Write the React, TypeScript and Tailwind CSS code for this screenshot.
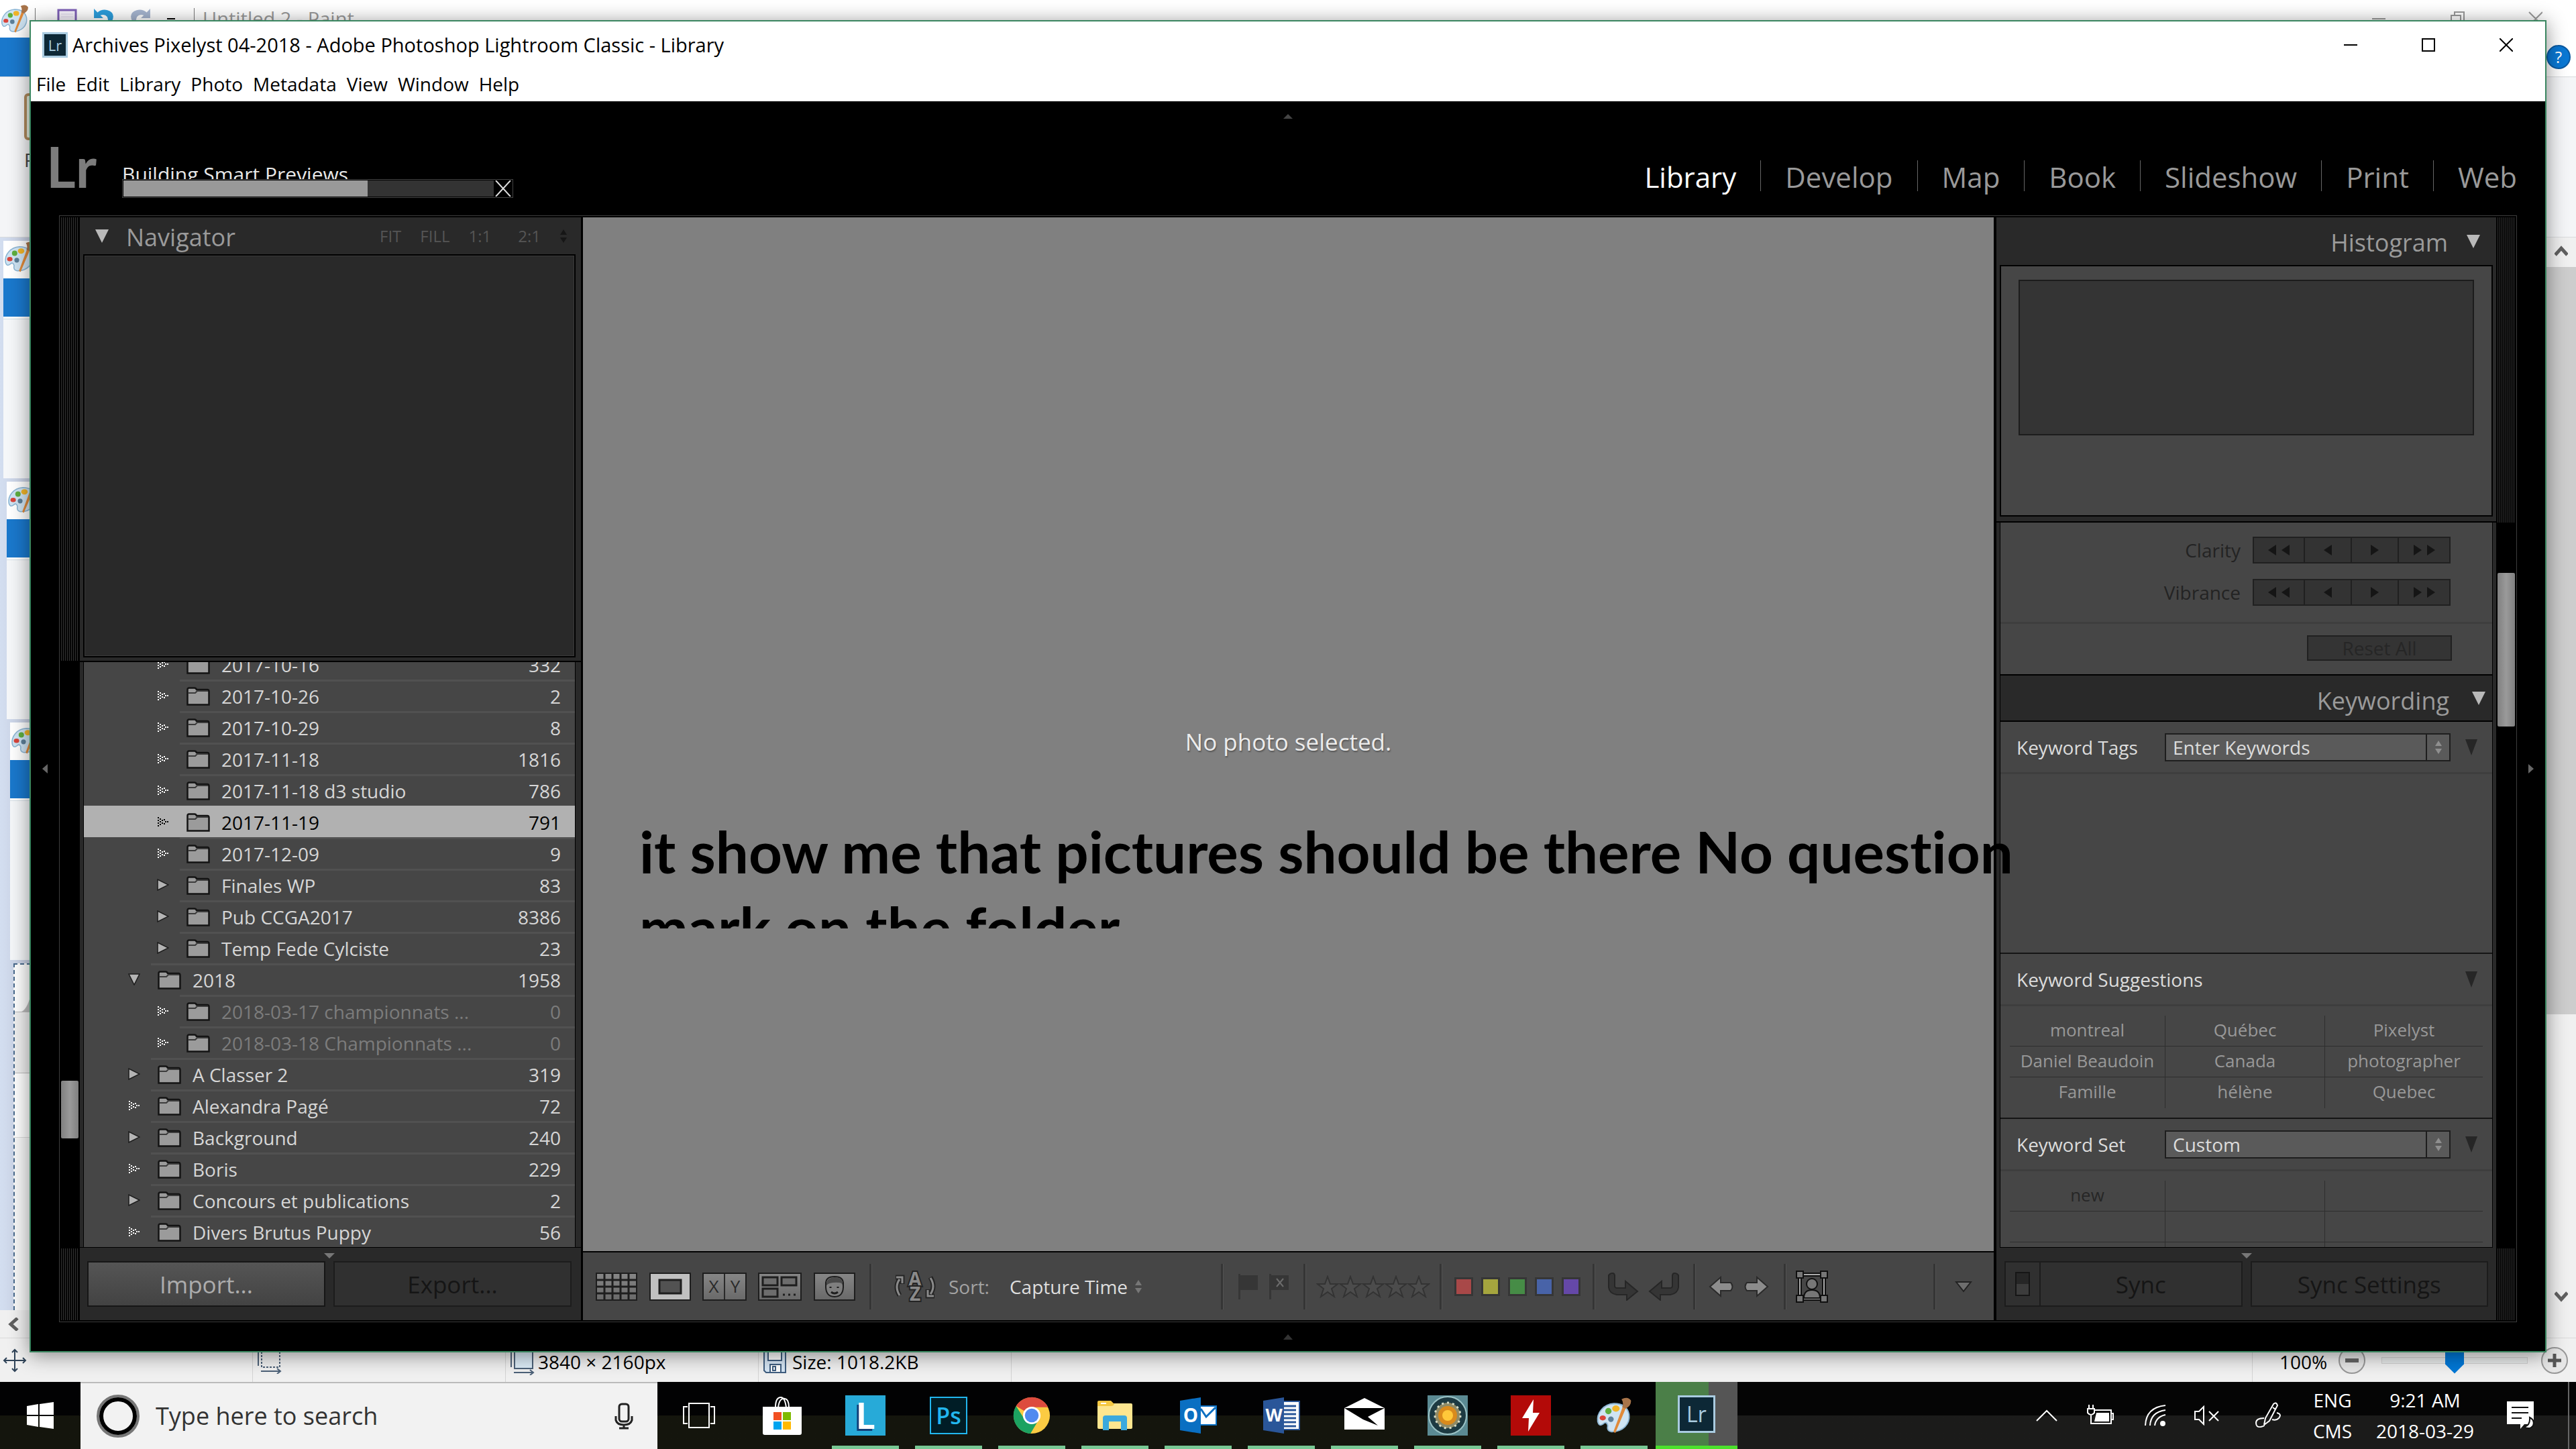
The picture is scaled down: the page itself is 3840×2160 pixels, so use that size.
import type { ReactNode } from "react";

type Folder = {
  name: string;
  count: number;
  level: 1 | 2;
  arrow: "dots" | "closed" | "open";
  selected?: boolean;
  missing?: boolean;
};

const folders: Folder[] = [
  { name: "2017-10-16", count: 332, level: 2, arrow: "dots" },
  { name: "2017-10-26", count: 2, level: 2, arrow: "dots" },
  { name: "2017-10-29", count: 8, level: 2, arrow: "dots" },
  { name: "2017-11-18", count: 1816, level: 2, arrow: "dots" },
  { name: "2017-11-18 d3 studio", count: 786, level: 2, arrow: "dots" },
  { name: "2017-11-19", count: 791, level: 2, arrow: "dots", selected: true },
  { name: "2017-12-09", count: 9, level: 2, arrow: "dots" },
  { name: "Finales WP", count: 83, level: 2, arrow: "closed" },
  { name: "Pub CCGA2017", count: 8386, level: 2, arrow: "closed" },
  { name: "Temp Fede Cylciste", count: 23, level: 2, arrow: "closed" },
  { name: "2018", count: 1958, level: 1, arrow: "open" },
  { name: "2018-03-17 championnats ...", count: 0, level: 2, arrow: "dots", missing: true },
  { name: "2018-03-18 Championnats ...", count: 0, level: 2, arrow: "dots", missing: true },
  { name: "A Classer 2", count: 319, level: 1, arrow: "closed" },
  { name: "Alexandra Pagé", count: 72, level: 1, arrow: "dots" },
  { name: "Background", count: 240, level: 1, arrow: "closed" },
  { name: "Boris", count: 229, level: 1, arrow: "dots" },
  { name: "Concours et publications", count: 2, level: 1, arrow: "closed" },
  { name: "Divers Brutus Puppy", count: 56, level: 1, arrow: "dots" },
];

const menus = ["File", "Edit", "Library", "Photo", "Metadata", "View", "Window", "Help"];
const modules = ["Library", "Develop", "Map", "Book", "Slideshow", "Print", "Web"];
const suggestions = ["montreal", "Québec", "Pixelyst", "Daniel Beaudoin", "Canada", "photographer", "Famille", "hélène", "Quebec"];
const customSet = ["new", "", "", "", "", "", "", "", ""];
const labels = [
  { name: "Red", color: "bg-[#a84848]" },
  { name: "Yellow", color: "bg-[#a5a53e]" },
  { name: "Green", color: "bg-[#468c46]" },
  { name: "Blue", color: "bg-[#4863a8]" },
  { name: "Purple", color: "bg-[#6548a8]" },
];

/* ---------- small drawings ---------- */

function Tri({ dir, className }: { dir: "up" | "down" | "left" | "right"; className: string }) {
  const d = {
    up: "M0 10L5 0L10 10Z",
    down: "M0 0H10L5 10Z",
    left: "M10 0V10L0 5Z",
    right: "M0 0L10 5L0 10Z",
  }[dir];
  return (
    <svg viewBox="0 0 10 10" preserveAspectRatio="none" className={`shrink-0 ${className}`} aria-hidden="true">
      <path d={d} fill="currentColor" />
    </svg>
  );
}

function UpDown({ className }: { className: string }) {
  return (
    <svg viewBox="0 0 12 24" className={`shrink-0 ${className}`} aria-hidden="true">
      <path d="M1 10L6 2L11 10ZM1 14H11L6 22Z" fill="currentColor" />
    </svg>
  );
}

function FolderArrow({ kind }: { kind: Folder["arrow"] }) {
  if (kind === "open") {
    return (
      <svg width="18" height="18" viewBox="0 0 18 18" aria-hidden="true">
        <path d="M1 1H17L9 17Z" fill="#b4b4b4" stroke="#1d1d1d" strokeWidth="1.500" />
      </svg>
    );
  }
  if (kind === "closed") {
    return (
      <svg width="18" height="18" viewBox="0 0 18 18" aria-hidden="true">
        <path d="M1 1V17L17 9Z" fill="#b4b4b4" stroke="#1d1d1d" strokeWidth="1.500" />
      </svg>
    );
  }
  const dots = [
    [1, 2], [1, 6], [1, 10], [1, 14], [4, 4], [4, 8], [4, 12], [7, 6], [7, 10], [10, 5], [10, 11], [12, 8], [15, 8],
  ];
  return (
    <svg width="18" height="18" viewBox="0 0 18 18" aria-hidden="true">
      {dots.map(([x, y]) => (
        <rect key={`${x}-${y}`} x={x} y={y} width="2" height="2" fill="currentColor" />
      ))}
    </svg>
  );
}

function FolderIcon() {
  return (
    <svg width="35" height="28" viewBox="0 0 35 28" aria-hidden="true">
      <path d="M1.5 4Q1.5 1.5 4 1.5H12Q14 1.5 15 4H31Q33.500 4 33.500 7V26.500H1.500Z" fill="#9b9b9b" stroke="#141414" strokeWidth="2.500" />
      <path d="M3 9H13L16 6H32" fill="none" stroke="#3c3c3c" strokeWidth="2" />
    </svg>
  );
}

function Palette({ className }: { className: string }) {
  return (
    <svg viewBox="0 0 60 60" className={`shrink-0 ${className}`} aria-hidden="true">
      <path
        d="M30 11C13 12 2 26 4 40Q6 48 12 44Q18 38 20 46Q18 55 26 56C44 56 56 44 54 28Q50 11 30 11Z"
        fill="#cfe4f3"
        stroke="#8db6d4"
        strokeWidth="2"
      />
      <circle cx="25" cy="36" r="4.500" fill="#5c7f99" />
      <ellipse cx="12" cy="34" rx="5" ry="4" fill="#d9453c" />
      <ellipse cx="21" cy="23" rx="5" ry="5" fill="#5fae3f" />
      <ellipse cx="33" cy="19" rx="6" ry="5" fill="#f0b429" />
      <path d="M44 16L49 18L32 58L29 56Z" fill="#e08a3a" />
      <path d="M42 4Q52 -1 57 6Q58 14 49 19L43 17Q46 10 42 4Z" fill="#a8744a" />
    </svg>
  );
}

function LrBadge({ className }: { className: string }) {
  return (
    <span className={`flex shrink-0 items-center justify-center border-[#a9cbe0] bg-[#0d2836] text-[#a9cbe0] ${className}`}>Lr</span>
  );
}

function Grip({ className }: { className: string }) {
  return (
    <div
      className={`bg-[repeating-linear-gradient(90deg,#303030_0px,#303030_1px,#050505_1px,#050505_3px)] ${className}`}
    />
  );
}

/* ---------- Paint, behind ---------- */

function NestedPaint({ className }: { className: string }) {
  return (
    <div className={`flex w-full flex-col bg-[#f5f7f9] ${className}`}>
      <div className="h-14 bg-white">
        <Palette className="size-12" />
      </div>
      <div className="h-[57px] bg-[#1a78cc]" />
      <div className="h-1 border-b border-[#d5dfe6] bg-white" />
    </div>
  );
}

function PaintWindow() {
  return (
    <section aria-label="Paint" className="flex min-h-0 flex-1 flex-col overflow-hidden bg-white">
      <header className="flex h-14 shrink-0 items-center">
        <Palette className="size-11" />
        <span className="ml-2 h-8 w-px bg-[#777]" />
        <svg viewBox="0 0 30 30" className="ml-8 size-[30px]" aria-hidden="true">
          <path d="M2 2H28V28H2Z" fill="#f6f3fb" stroke="#7d5fb5" strokeWidth="3" />
          <path d="M6 8H24M6 12H24" stroke="#dcd6ea" strokeWidth="1" />
        </svg>
        <svg viewBox="0 0 30 30" className="ml-6 size-8" aria-hidden="true">
          <path d="M1 1V14H14L10 10Q24 6 20 28Q36 8 20 3Q12 1 6 6Z" fill="#2c9ddb" />
        </svg>
        <svg viewBox="0 0 30 30" className="ml-[22px] size-8" aria-hidden="true">
          <path d="M29 1V14H16L20 10Q6 6 10 28Q-6 8 10 3Q18 1 24 6Z" fill="#a5b4cf" />
        </svg>
        <span className="ml-6 h-0.5 w-3 bg-black" />
        <span className="ml-7 h-8 w-px bg-[#777]" />
        <h2 className="ml-3 flex-1 text-[29px] text-[#999]">Untitled 2 - Paint</h2>
        <svg viewBox="0 0 260 24" className="mr-[50px] h-6 w-[260px]" fill="none" stroke="#999" strokeWidth="2" aria-hidden="true">
          <path d="M6 12H26M124 7H138V22H124ZM129 7V2H143V17H138M240 2L260 22M260 2L240 22" />
        </svg>
      </header>
      <div className="flex h-[59px] shrink-0 items-center justify-between border-b border-[#d9dbdd]">
        <div className="h-full w-12 bg-[#1a78cc]" />
        <button aria-label="Help" className="mr-2 size-9 rounded-full border-2 border-[#0b5aa2] bg-[#0a78d4] text-2xl leading-8 text-white">
          ?
        </button>
      </div>
      <div className="flex h-[238px] shrink-0 flex-col items-start bg-[#f4f5f7] pt-6 pl-9">
        <div className="h-[70px] w-14 rounded-md border-4 border-[#b08a5c] bg-[#dfeadb]" />
        <span className="mt-2 text-[28px] text-[#444]">P</span>
      </div>
      <div className="flex min-h-0 flex-1 border-t border-[#d9dbdd]">
        <div className="flex flex-1 flex-col gap-[5px] bg-linear-to-r from-[#d3def0] to-[#c6cde0] to-[44px] pt-[5px]">
          <NestedPaint className="ml-[5px] h-[354px]" />
          <NestedPaint className="ml-2.5 h-[354px]" />
          <NestedPaint className="ml-[15px] h-[354px]" />
          <div className="ml-5 flex flex-1 flex-col border-t-2 border-l-2 border-dashed border-[#4a6a8c] bg-[#f8f8f8]">
            <svg viewBox="0 0 50 70" className="h-[70px] w-[50px] bg-white" aria-hidden="true">
              <path d="M10 70Q20 66 26 36V70Z" fill="#bcbcbc" />
            </svg>
            <div className="h-[92px] border-y border-[#bdbdbd] bg-[#f0f0f0]" />
            <div className="h-24 border-b border-[#dcdcdc] bg-white" />
          </div>
        </div>
        <div className="flex w-11 flex-col items-center bg-[#f0f0f0]">
          <svg viewBox="0 0 20 16" className="mt-3 h-4 w-5" fill="none" stroke="#606060" strokeWidth="5" aria-hidden="true">
            <path d="M1 14L10 4L19 14" />
          </svg>
          <div className="mt-4 h-[1114px] w-full bg-[#cdcdcd]" />
          <svg viewBox="0 0 20 16" className="mt-auto mb-3 h-4 w-5" fill="none" stroke="#606060" strokeWidth="5" aria-hidden="true">
            <path d="M1 2L10 12L19 2" />
          </svg>
        </div>
      </div>
      <div className="flex h-[42px] shrink-0 items-center border-b border-[#d9d9d9] bg-[#f0f0f0] pl-3">
        <svg viewBox="0 0 16 20" className="h-5 w-4" fill="none" stroke="#606060" strokeWidth="5" aria-hidden="true">
          <path d="M14 1L4 10L14 19" />
        </svg>
      </div>
      <footer className="flex h-[65px] shrink-0 items-center bg-[#f0f0f0] pl-1 text-[28px] text-black">
        <svg viewBox="0 0 36 36" className="size-9" fill="none" stroke="#2f4358" strokeWidth="2" aria-hidden="true">
          <path d="M18 2V34M2 18H34M14 6L18 2L22 6M14 30L18 34L22 30M6 14L2 18L6 22M30 14L34 18L30 22" />
        </svg>
        <div className="ml-[336px] flex h-full w-[377px] items-center border-l border-[#d4d4d4] pl-1.5">
          <svg viewBox="0 0 38 40" className="h-10 w-[38px]" fill="none" stroke="#4c6178" strokeWidth="2" aria-hidden="true">
            <path d="M2 0V28M6 36H34M30 32L35 36L30 40" />
            <path d="M7 4H34V30H7Z" strokeDasharray="3 2" />
          </svg>
        </div>
        <div className="flex h-full w-[377px] items-center border-l border-[#d4d4d4] pt-1 pl-1.5">
          <svg viewBox="0 0 38 40" className="mr-1 h-10 w-[38px]" fill="none" stroke="#4c6178" strokeWidth="2" aria-hidden="true">
            <path d="M2 0V28M6 36H34M30 32L35 36L30 40" />
            <path d="M7 4H34V30H7Z" fill="#dcecf7" />
          </svg>
          3840 × 2160px
        </div>
        <div className="flex h-full w-[377px] items-center border-l border-[#d4d4d4] pt-1 pl-1.5">
          <svg viewBox="0 0 36 36" className="mr-2 size-9" fill="#d6e6f5" stroke="#3f5e80" strokeWidth="2" aria-hidden="true">
            <path d="M2 2H34V34H5L2 31Z" />
            <path d="M8 2H28V16H8ZM11 22H27V34H11ZM15 25H19V31H15Z" fill="#fff" />
          </svg>
          Size: 1018.2KB
        </div>
        <div className="h-full flex-1 border-l border-[#d4d4d4]" />
        <div className="flex h-full w-[483px] items-center border-l border-[#d4d4d4] pl-10">
          <label htmlFor="zoom" className="w-[88px] pt-1">
            100%
          </label>
          <button aria-label="Zoom out" className="flex size-10 items-center justify-center rounded-full border-2 border-[#999] bg-[#e6e6e6]">
            <span className="h-1.5 w-5 bg-[#666]" />
          </button>
          <input
            id="zoom"
            type="range"
            defaultValue={50}
            className="ml-6 h-12 w-[218px] appearance-none bg-transparent [&::-webkit-slider-runnable-track]:h-2.5 [&::-webkit-slider-runnable-track]:border [&::-webkit-slider-runnable-track]:border-[#d0d0d0] [&::-webkit-slider-runnable-track]:bg-[#e7eaea] [&::-webkit-slider-thumb]:-mt-4 [&::-webkit-slider-thumb]:h-10 [&::-webkit-slider-thumb]:w-7 [&::-webkit-slider-thumb]:appearance-none [&::-webkit-slider-thumb]:bg-[#0078d7] [&::-webkit-slider-thumb]:[clip-path:polygon(0_0,100%_0,100%_65%,50%_100%,0_65%)]"
          />
          <button aria-label="Zoom in" className="ml-5 flex size-10 items-center justify-center rounded-full border-2 border-[#999] bg-[#e6e6e6]">
            <svg viewBox="0 0 20 20" className="size-5" stroke="#555" strokeWidth="5" aria-hidden="true">
              <path d="M0 10H20M10 0V20" />
            </svg>
          </button>
        </div>
      </footer>
    </section>
  );
}

/* ---------- Lightroom ---------- */

function FolderRow({ folder }: { folder: Folder }) {
  const { name, count, level, arrow, selected, missing } = folder;
  const tone = selected ? "text-black" : missing ? "text-[#7c7c7c]" : "text-[#d6d6d6]";
  return (
    <li className={`flex h-[47px] shrink-0 text-[28px] ${selected ? "bg-[#b1b1b1]" : ""} ${level === 2 ? "pl-[109px]" : "pl-[66px]"}`}>
      <button aria-label={`Expand ${name}`} className={`flex w-[34px] items-center ${selected ? "text-black" : "text-white"}`}>
        <FolderArrow kind={arrow} />
      </button>
      <div className={`flex flex-1 items-center border-t-[3px] pr-[21px] pl-2.5 ${selected ? "border-[#b1b1b1]" : "border-[#515151]"} ${tone}`}>
        <FolderIcon />
        <span className="ml-[17px] flex-1 whitespace-nowrap">{name}</span>
        <span>{count}</span>
      </div>
    </li>
  );
}

function LeftPanel() {
  return (
    <aside className="flex w-[747px] shrink-0 flex-col bg-[#292929]">
      <header className="flex h-[55px] shrink-0 items-center pr-5 pl-[23px] text-[#9a9a9a]">
        <Tri dir="down" className="h-5 w-5 text-[#b9b9b9]" />
        <h2 className="ml-[26px] flex-1 pt-1 text-[36px] leading-none">Navigator</h2>
        <div className="flex items-center text-2xl text-[#555]">
          <button>FIT</button>
          <button className="ml-7">FILL</button>
          <button className="ml-7">1:1</button>
          <button className="ml-10">2:1</button>
          <UpDown className="ml-7 h-6 w-3 text-[#161616]" />
        </div>
      </header>
      <div className="mr-2 ml-[5px] h-[601px] shrink-0 border-2 border-black bg-[#292929] inset-shadow-[0_0_0_1px_#3a3a3a]" />
      <div className="h-[7px] shrink-0 border-b-2 border-black" />
      <ul className="mr-2 ml-[5px] flex min-h-0 flex-1 flex-col justify-end overflow-hidden border-x border-black bg-[#464646]">
        {folders.map((f) => (
          <FolderRow key={f.name} folder={f} />
        ))}
      </ul>
      <footer className="flex h-[109px] shrink-0 flex-col items-center border-t border-black pt-2 pr-3.5 pl-[11px]">
        <Tri dir="down" className="h-2 w-4 text-[#777]" />
        <div className="mt-1 flex w-full gap-3 text-[35px] leading-none">
          <button className="h-[68px] flex-1 border-2 border-[#161616] bg-linear-to-b from-[#555] to-[#434343] text-[#acacac]">Import...</button>
          <button className="h-[68px] flex-1 border-2 border-[#1c1c1c] bg-[#303030] text-[#151515]">Export...</button>
        </div>
      </footer>
    </aside>
  );
}

function Divider() {
  return <span className="h-[68px] w-1 shrink-0 border-r border-[#525252] bg-[#353535]" />;
}

function ViewButton({ label, width, active, children }: { label: string; width: string; active?: boolean; children: ReactNode }) {
  return (
    <button
      aria-label={label}
      className={`h-[42px] shrink-0 border-2 border-[#1e1e1e] ${width} ${active ? "bg-[#c0c0c0]" : "bg-linear-to-b from-[#868686] to-[#6a6a6a]"}`}
    >
      {children}
    </button>
  );
}

function Toolbar() {
  return (
    <div className="flex h-[101px] shrink-0 items-center bg-[#464646] pr-8 pl-[19px] text-[28px]">
      <ViewButton label="Grid view" width="w-[62px]">
        <svg viewBox="0 0 58 38" className="size-full" stroke="#1e1e1e" strokeWidth="3" aria-hidden="true">
          <path d="M11 0V38M23 0V38M35 0V38M47 0V38M0 9H58M0 19H58M0 29H58" />
        </svg>
      </ViewButton>
      <span className="w-[18px]" />
      <ViewButton label="Loupe view" width="w-[62px]" active>
        <svg viewBox="0 0 58 38" className="size-full" aria-hidden="true">
          <path d="M13 9H45V29H13Z" fill="#525252" stroke="#1e1e1e" strokeWidth="3" />
        </svg>
      </ViewButton>
      <span className="w-[17px]" />
      <ViewButton label="Compare view" width="w-[66px]">
        <svg viewBox="0 0 62 38" className="size-full" fill="#2a2a2a" fontSize="26" textAnchor="middle" aria-hidden="true">
          <path d="M31 0V38" stroke="#2a2a2a" strokeWidth="2" />
          <text x="15" y="28">X</text>
          <text x="47" y="28">Y</text>
        </svg>
      </ViewButton>
      <span className="w-[17px]" />
      <ViewButton label="Survey view" width="w-[65px]">
        <svg viewBox="0 0 61 38" className="size-full" fill="#6d6d6d" stroke="#1e1e1e" strokeWidth="3" aria-hidden="true">
          <path d="M5 5H27V17H5ZM33 5H55V17H33ZM5 22H27V34H5Z" />
          <path d="M35 31H38M43 31H46M51 31H54" />
        </svg>
      </ViewButton>
      <span className="w-[18px]" />
      <ViewButton label="People" width="w-[62px]">
        <svg viewBox="0 0 58 38" className="size-full" aria-hidden="true">
          <path d="M16 16Q15 4 29 4Q43 4 42 16Q43 34 29 34Q15 34 16 16Z" fill="#7f7f7f" stroke="#1e1e1e" strokeWidth="2" />
          <path d="M17 17Q22 12 36 13Q40 13 41 17Q42 5 29 5Q16 6 17 17Z" fill="#4a4a4a" />
          <path d="M23 19V21M34 19V21M24 27Q29 31 34 27" fill="none" stroke="#1e1e1e" strokeWidth="3" />
        </svg>
      </ViewButton>
      <span className="w-[21px]" />
      <Divider />
      <button aria-label="Sort direction" className="ml-8">
        <svg viewBox="0 0 64 48" className="h-12 w-16" fill="none" aria-hidden="true">
          <path d="M9 37Q1 24 9 13M3 10H13V20M55 10Q63 24 55 35M61 38H51V28" stroke="#242424" strokeWidth="7" />
          <path d="M9 37Q1 24 9 13M4 10H13V19M55 11Q63 24 55 35M60 38H51V29" stroke="#8a8a8a" strokeWidth="3" />
          <g fill="#8a8a8a" stroke="#242424" strokeWidth="4" fontSize="28" fontWeight="700" textAnchor="middle" style={{ paintOrder: "stroke" }}>
            <text x="32" y="23">A</text>
            <text x="32" y="45">Z</text>
          </g>
        </svg>
      </button>
      <span className="ml-[18px] text-[#a3a3a3]">Sort:</span>
      <button className="ml-[30px] flex items-center gap-2.5 whitespace-nowrap text-[#dedede]">
        Capture Time
        <UpDown className="h-6 w-3 text-[#777]" />
      </button>
      <span className="w-[117px]" />
      <Divider />
      <button aria-label="Flag" className="ml-[22px]">
        <svg viewBox="0 0 30 38" className="h-[38px] w-[30px]" fill="#363636" aria-hidden="true">
          <path d="M0 0H3V2H29V24H3V38H0Z" />
        </svg>
      </button>
      <button aria-label="Reject" className="ml-4">
        <svg viewBox="0 0 30 38" className="h-[38px] w-[30px]" fill="#363636" aria-hidden="true">
          <path d="M0 0H3V2H29V24H3V38H0Z" />
          <path d="M11 7L21 19M21 7L11 19" stroke="#6c6c6c" strokeWidth="2" />
        </svg>
      </button>
      <span className="w-[21px]" />
      <Divider />
      <div className="ml-[15px] flex">
        {[1, 2, 3, 4, 5].map((n) => (
          <button key={n} aria-label={`${n} stars`}>
            <svg viewBox="0 0 34 34" className="size-[34px]" aria-hidden="true">
              <path d="M17 2L21 13H32L23 20L27 32L17 25L7 32L11 20L2 13H13Z" fill="#4c4c4c" stroke="#333" strokeWidth="2" />
            </svg>
          </button>
        ))}
      </div>
      <span className="w-3.5" />
      <Divider />
      <div className="ml-[18px] flex gap-3">
        {labels.map((l) => (
          <button key={l.name} aria-label={l.name} className={`h-7 w-7 border-[3px] border-[#363636] ${l.color}`} />
        ))}
      </div>
      <span className="w-[18px]" />
      <Divider />
      <svg viewBox="0 0 108 42" className="ml-[18px] h-[42px] w-[108px] shrink-0" fill="#353535" stroke="#262626" strokeWidth="2" aria-hidden="true">
        <path d="M4 2Q10 -1 11 4V20Q11 23 15 23H27V13L45 28L29 41V33H14Q3 31 2 22V4Z" />
        <path d="M104 2Q98 -1 97 4V20Q97 23 93 23H81V13L63 28L79 41V33H94Q105 31 106 22V4Z" />
      </svg>
      <span className="w-5" />
      <Divider />
      <svg viewBox="0 0 90 32" className="ml-[19px] h-8 w-[90px] shrink-0" fill="#8c8c8c" stroke="#2a2a2a" strokeWidth="2" aria-hidden="true">
        <path d="M2 16L18 2V10H33Q38 16 33 22H18V30Z" />
        <path d="M88 16L72 2V10H57Q52 16 57 22H72V30Z" />
      </svg>
      <span className="w-[22px]" />
      <Divider />
      <button aria-label="Draw face region" className="ml-3.5">
        <svg viewBox="0 0 48 48" className="size-12" fill="#777" stroke="#101010" strokeWidth="2" aria-hidden="true">
          <path d="M6 6H42V42H6Z" fill="#464646" stroke="#101010" strokeWidth="6" />
          <path d="M6 6H42V42H6Z" fill="none" stroke="#aaa" strokeWidth="2" />
          <ellipse cx="24" cy="20" rx="8" ry="8" />
          <path d="M12 41Q12 29 24 29Q36 29 36 41Z" />
          <path d="M1 1H11V11H1ZM37 1H47V11H37ZM1 37H11V47H1ZM37 37H47V47H37Z" />
        </svg>
      </button>
      <span className="ml-auto" />
      <Divider />
      <svg viewBox="0 0 26 18" className="ml-7 h-[18px] w-[26px] shrink-0" aria-hidden="true">
        <path d="M2 2H24L13 16Z" fill="#6e6e6e" stroke="#222" strokeWidth="2" />
      </svg>
    </div>
  );
}

function StepRow({ label, className }: { label: string; className: string }) {
  const cell = "flex items-center justify-center gap-2 border-[#202020]";
  return (
    <div className={`flex h-10 items-center justify-end pr-[62px] ${className}`}>
      <span className="mr-[18px] text-[28px] text-[#232323]">{label}</span>
      <div className="flex h-10 w-[295px] border-2 border-[#202020] bg-[#333] text-[#151515]">
        <button aria-label={`${label} minus 20`} className={`w-[76px] border-r-2 ${cell}`}>
          <Tri dir="left" className="h-4 w-3" />
          <Tri dir="left" className="h-4 w-3" />
        </button>
        <button aria-label={`${label} minus 5`} className={`w-[70px] border-r-2 ${cell}`}>
          <Tri dir="left" className="h-4 w-3" />
        </button>
        <button aria-label={`${label} plus 5`} className={`w-[70px] border-r-2 ${cell}`}>
          <Tri dir="right" className="h-4 w-3" />
        </button>
        <button aria-label={`${label} plus 20`} className={`flex-1 ${cell}`}>
          <Tri dir="right" className="h-4 w-3" />
          <Tri dir="right" className="h-4 w-3" />
        </button>
      </div>
    </div>
  );
}

function SelectRow({ id, label, value }: { id: string; label: string; value: string }) {
  return (
    <div className="flex h-[78px] shrink-0 items-center border-b-[3px] border-[#3e3e3e] pr-[22px] pl-6 text-[28px] text-[#dcdcdc]">
      <label htmlFor={id} className="w-[221px]">
        {label}
      </label>
      <div className="flex h-[42px] flex-1 border-2 border-[#1e1e1e] bg-[#5a5a5a]">
        <select id={id} className="min-w-0 flex-1 appearance-none bg-transparent pl-2.5 leading-9">
          <option>{value}</option>
        </select>
        <div className="flex w-[35px] items-center justify-center border-l-2 border-[#1e1e1e]">
          <UpDown className="h-6 w-3 text-[#8f8f8f]" />
        </div>
      </div>
      <Tri dir="down" className="ml-[22px] h-6 w-[18px] text-[#262626]" />
    </div>
  );
}

function KeywordGrid({ words, tone }: { words: string[]; tone: string }) {
  return (
    <div className={`grid shrink-0 grid-cols-[232px_238px_1fr] px-3.5 py-3.5 text-[26px] leading-none ${tone}`}>
      {words.map((w, i) => (
        <button
          key={i}
          className={`h-[46px] border-[#2e2e2e] pb-1 whitespace-nowrap ${i % 3 < 2 ? "border-r" : ""} ${i < 6 ? "border-b" : ""}`}
        >
          {w}
        </button>
      ))}
    </div>
  );
}

function RightPanel() {
  return (
    <aside className="flex w-[745px] shrink-0 flex-col bg-[#292929] px-[5px]">
      <header className="flex h-[71px] shrink-0 items-center justify-end pr-[19px] text-[#9a9a9a]">
        <h2 className="pt-1 text-[36px] leading-none">Histogram</h2>
        <Tri dir="down" className="ml-7 h-5 w-5 text-[#b9b9b9]" />
      </header>
      <div className="h-[375px] shrink-0 border-2 border-black bg-[#464646] px-[26px] pt-5">
        <div className="h-[232px] border-2 border-[#1c1c1c] bg-[#343434]" />
      </div>
      <div className="-mx-[5px] h-[9px] shrink-0 border-b-2 border-black" />
      <div className="flex min-h-0 flex-1 flex-col overflow-hidden border-x border-black bg-[#464646]">
        <StepRow label="Clarity" className="mt-[21px] shrink-0" />
        <StepRow label="Vibrance" className="mt-[23px] shrink-0" />
        <div className="mt-6 flex h-[78px] shrink-0 items-center justify-end border-t-[3px] border-[#3e3e3e] pr-[60px] pb-1">
          <button className="h-[38px] w-[216px] border-2 border-[#202020] bg-[#343434] text-[28px] leading-none text-[#262626]">Reset All</button>
        </div>
        <header className="flex h-[71px] shrink-0 items-center justify-end border-y-2 border-black bg-[#292929] pr-2.5 text-[#9a9a9a]">
          <h2 className="pt-2 text-[36px] leading-none">Keywording</h2>
          <Tri dir="down" className="ml-[34px] h-5 w-5 text-[#b9b9b9]" />
        </header>
        <SelectRow id="tags" label="Keyword Tags" value="Enter Keywords" />
        <textarea aria-label="Keywords" className="h-[266px] shrink-0 resize-none bg-transparent" />
        <div className="flex h-20 shrink-0 items-center justify-between border-t-2 border-b-[3px] border-t-[#151515] border-b-[#3e3e3e] pr-[22px] pl-6 text-[28px] text-[#dcdcdc]">
          <h3>Keyword Suggestions</h3>
          <Tri dir="down" className="h-6 w-[18px] text-[#262626]" />
        </div>
        <KeywordGrid words={suggestions} tone="text-[#989898]" />
        <div className="h-0.5 shrink-0 bg-[#151515]" />
        <SelectRow id="set" label="Keyword Set" value="Custom" />
        <KeywordGrid words={customSet} tone="text-[#262626]" />
      </div>
      <footer className="flex h-[109px] shrink-0 flex-col items-center border-t border-black px-[7px] pt-2">
        <Tri dir="down" className="h-2 w-4 text-[#777]" />
        <div className="mt-1 flex w-full gap-3 text-[35px] leading-none text-[#151515]">
          <div className="flex h-[68px] flex-1 border-2 border-[#1c1c1c] bg-[#303030]">
            <button aria-label="Auto sync" className="flex w-[52px] items-center justify-center border-r-2 border-[#1c1c1c]">
              <span className="flex h-9 w-[22px] items-end border-2 border-[#161616] bg-[#262626]">
                <span className="h-4 w-full bg-[#3c3c3c]" />
              </span>
            </button>
            <button className="flex-1">Sync</button>
          </div>
          <button className="h-[68px] flex-1 border-2 border-[#1c1c1c] bg-[#303030]">Sync Settings</button>
        </div>
      </footer>
    </aside>
  );
}

function SideRail({ gripTop, gap, thumb }: { gripTop: string; gap: string; thumb: string }) {
  return (
    <div className="flex w-[26px] shrink-0 flex-col">
      <Grip className={gripTop} />
      <div className={`rounded-xs bg-linear-to-r from-[#808080] via-[#9a9a9a] to-[#808080] ${gap} ${thumb}`} />
      <Grip className="mt-auto h-[107px]" />
    </div>
  );
}

function LightroomWindow() {
  return (
    <main className="absolute top-[30px] right-11 bottom-36 left-11 flex flex-col border-2 border-[#3a8660] bg-black shadow-[0_4px_28px_rgba(0,0,0,0.45)]">
      <header className="flex h-[70px] shrink-0 items-center bg-white pl-[17px] text-[29px] text-black">
        <LrBadge className="size-[38px] border-[3px] text-[22px] leading-none" />
        <h1 className="ml-[7px] flex-1 whitespace-nowrap">Archives Pixelyst 04-2018 - Adobe Photoshop Lightroom Classic - Library</h1>
        <button aria-label="Minimize" className="flex h-full w-[116px] items-center justify-center">
          <span className="h-0.5 w-5 bg-black" />
        </button>
        <button aria-label="Maximize" className="flex h-full w-[116px] items-center justify-center">
          <span className="size-5 border-2 border-black" />
        </button>
        <button aria-label="Close" className="flex h-full w-[116px] items-center justify-center">
          <svg viewBox="0 0 20 20" className="size-5" stroke="#000" strokeWidth="2" aria-hidden="true">
            <path d="M0 0L20 20M20 0L0 20" />
          </svg>
        </button>
      </header>
      <nav className="flex h-[49px] shrink-0 items-center gap-[15px] bg-white pb-1 pl-2 text-[28px] text-black">
        {menus.map((m) => (
          <button key={m}>{m}</button>
        ))}
      </nav>

      <button aria-label="Hide module picker" className="flex h-11 shrink-0 items-center justify-center">
        <Tri dir="up" className="h-[7px] w-3.5 text-[#444]" />
      </button>

      <div className="flex h-[126px] shrink-0 items-start pr-[42px] pl-[23px]">
        <span className="w-[113px] pt-2 font-[Lato] text-[84px] leading-[90px] font-bold text-[#7c7c7c]">Lr</span>
        <div className="w-[583px] pt-[47px]">
          <p className="h-[25px] overflow-hidden text-[30px] leading-9 text-[#e8e8e8]">Building Smart Previews</p>
          <div className="flex h-7 border border-[#444] p-px">
            <div className="flex-1 bg-[#333]">
              <div className="h-full w-[66%] bg-[#999]" />
            </div>
            <button aria-label="Cancel" className="flex w-[27px] items-center justify-center">
              <svg viewBox="0 0 24 24" className="size-6" stroke="#ddd" strokeWidth="2" aria-hidden="true">
                <path d="M1 0L23 24M23 0L1 24" />
              </svg>
            </button>
          </div>
        </div>
        <nav className="mt-11 ml-auto flex h-[46px] items-center text-[42px] leading-none">
          {modules.map((m, i) => (
            <div key={m} className="flex h-full items-center">
              {i > 0 && <span className="mx-9 h-full w-px bg-[#666]" />}
              <button className={`pt-1 ${i === 0 ? "text-white" : "text-[#999]"}`}>{m}</button>
            </div>
          ))}
        </nav>
      </div>

      <div className="flex min-h-0 flex-1">
        <button aria-label="Hide left panel" className="flex w-[42px] shrink-0 items-center justify-center">
          <Tri dir="left" className="h-3.5 w-2 text-[#666]" />
        </button>
        <div className="flex min-w-0 flex-1 border border-[#3c3c3c] p-0.5">
          <SideRail gripTop="h-[661px]" gap="mt-[626px]" thumb="h-[86px]" />
          <span className="w-0.5" />
          <LeftPanel />
          <section className="mr-1 ml-[3px] flex min-w-0 flex-1 flex-col">
            <div className="relative flex flex-1 items-center justify-center border-b-2 border-black bg-[#808080] pt-6">
              <p className="text-[35px] text-[#ececec] [text-shadow:1px_2px_2px_#555]">No photo selected.</p>
              {/* caption typed over the window, runs past the photo area */}
              <p className="absolute top-[888px] left-[84px] h-[172px] overflow-hidden font-[Lato] text-[87px] leading-[113px] font-bold whitespace-nowrap text-black [font-variant-ligatures:none]">
                it show me that pictures should be there No question
                <br />
                mark on the folder
              </p>
            </div>
            <Toolbar />
          </section>
          <RightPanel />
          <span className="w-0.5" />
          <SideRail gripTop="h-[455px]" gap="mt-[75px]" thumb="h-[229px]" />
        </div>
        <button aria-label="Hide right panel" className="flex w-[42px] shrink-0 items-center justify-center">
          <Tri dir="right" className="h-3.5 w-2 text-[#666]" />
        </button>
      </div>

      <button aria-label="Show filmstrip" className="flex h-[43px] shrink-0 items-center justify-center">
        <Tri dir="up" className="h-2 w-3.5 text-[#333]" />
      </button>
    </main>
  );
}

/* ---------- taskbar ---------- */

function Task({ label, open, children }: { label: string; open?: boolean; children: ReactNode }) {
  return (
    <button aria-label={label} className="flex h-full w-[124px] shrink-0 flex-col items-center">
      <span className="flex w-full flex-1 items-center justify-center pt-[5px]">{children}</span>
      <span className={`h-[5px] w-[100px] ${open ? "bg-[#78c894]" : ""}`} />
    </button>
  );
}

function Taskbar() {
  return (
    <footer className="flex h-[100px] shrink-0 bg-linear-to-b from-[#020203] from-50% to-[#14150d] to-50% text-white">
      <button aria-label="Start" className="flex w-[120px] shrink-0 items-center justify-center">
        <svg viewBox="0 0 40 40" className="size-10" fill="#fff" aria-hidden="true">
          <path d="M0 6L17 3V19H0ZM19 3L40 0V19H19ZM0 21H17V37L0 34ZM19 21H40V40L19 37Z" />
        </svg>
      </button>
      <div className="flex w-[860px] shrink-0 items-center border-t-2 border-[#bbb] bg-[#f2f2f2] pr-9 pl-6">
        <span className="size-16 rounded-full border-4 border-[#777] p-0">
          <span className="block size-14 rounded-full border-[6px] border-black" />
        </span>
        <input
          aria-label="Search"
          placeholder="Type here to search"
          className="ml-6 min-w-0 flex-1 bg-transparent text-[36px] placeholder:text-[#333]"
        />
        <svg viewBox="0 0 28 40" className="h-10 w-7" fill="none" stroke="#222" strokeWidth="3" aria-hidden="true">
          <rect x="7" y="2" width="14" height="26" rx="4" />
          <path d="M2 20V26Q4 33 14 33Q24 33 26 26V20M14 33V39M7 38H21" />
        </svg>
      </div>

      <Task label="Task View">
        <svg viewBox="0 0 50 40" className="h-10 w-[50px]" fill="none" stroke="#fff" strokeWidth="2" aria-hidden="true">
          <path d="M10 2H40V38H10ZM8 7H2V32H8M42 7H48V32H42" />
        </svg>
      </Task>
      <Task label="Store">
        <svg viewBox="0 0 60 60" className="size-[60px]" aria-hidden="true">
          <path d="M20 18Q20 3 28 3Q34 3 36 18M24 18Q26 3 34 5Q40 6 40 18" fill="none" stroke="#fff" strokeWidth="2" />
          <path d="M1 17H59V56Q59 59 56 59H4Q1 59 1 56Z" fill="#fff" />
          <path d="M17 25H29V37H17Z" fill="#f25022" />
          <path d="M31 25H43V37H31Z" fill="#7fba00" />
          <path d="M17 39H29V51H17Z" fill="#00a4ef" />
          <path d="M31 39H43V51H31Z" fill="#ffb900" />
        </svg>
      </Task>
      <Task label="Lynda" open>
        <span className="flex size-[60px] items-center justify-center bg-[#27aad8] font-[Lato] text-[54px] leading-none font-bold [text-shadow:-3px_3px_0_#123f78]">
          L
        </span>
      </Task>
      <Task label="Photoshop" open>
        <span className="flex size-14 items-center justify-center border-2 border-[#22b6ee] bg-[#001d26] text-[34px] leading-none font-semibold text-[#22b6ee]">
          Ps
        </span>
      </Task>
      <Task label="Chrome" open>
        <svg viewBox="0 0 60 60" className="size-14" aria-hidden="true">
          <circle cx="30" cy="30" r="29" fill="#fbcb43" />
          <path d="M30 30L5 15A29 29 0 0 1 56 17H30Z" fill="#dd4b3e" />
          <path d="M30 30L19 37L5 15A29 29 0 0 0 28 59L41 37Z" fill="#1ca261" />
          <circle cx="30" cy="30" r="14" fill="#fff" />
          <circle cx="30" cy="30" r="11" fill="#4f8af0" />
        </svg>
      </Task>
      <Task label="File Explorer" open>
        <svg viewBox="0 0 60 60" className="size-[60px]" aria-hidden="true">
          <path d="M4 12H54Q56 12 56 14V48Q56 50 54 50H6Q4 50 4 48Z" fill="#fde68f" />
          <path d="M4 10Q4 8 6 8H24L29 13Q28 16 24 16H4Z" fill="#f5c842" />
          <path d="M9 12H17" stroke="#fff" strokeWidth="2" />
          <path d="M12 52V34Q12 30 16 30H44Q48 30 48 34V52H39V39H21V52Z" fill="#3ba9dd" />
        </svg>
      </Task>
      <Task label="Outlook" open>
        <svg viewBox="0 0 60 60" className="size-[60px]" aria-hidden="true">
          <path d="M32 16H57V44H32Z" fill="#fff" stroke="#0a6fc2" strokeWidth="2" />
          <path d="M34 20L42 32L56 18" fill="none" stroke="#0a6fc2" strokeWidth="3" />
          <path d="M3 8L34 3V57L3 52Z" fill="#0a6fc2" />
          <text x="19" y="40" fill="#fff" fontSize="28" fontWeight="700" textAnchor="middle">
            O
          </text>
        </svg>
      </Task>
      <Task label="Word" open>
        <svg viewBox="0 0 60 60" className="size-[60px]" aria-hidden="true">
          <path d="M32 9H57V51H32Z" fill="#fff" stroke="#2a5699" strokeWidth="2" />
          <path d="M34 16H52M34 22H52M34 28H52M34 34H52M34 40H52M34 46H52" stroke="#2a5699" strokeWidth="3" />
          <path d="M3 8L34 3V57L3 52Z" fill="#2a5699" />
          <text x="19" y="39" fill="#fff" fontSize="26" fontWeight="700" textAnchor="middle">
            W
          </text>
        </svg>
      </Task>
      <Task label="Mail" open>
        <svg viewBox="0 0 60 60" className="size-[60px]" aria-hidden="true">
          <path d="M0 19L30 4L60 19V51H0Z" fill="#fff" />
          <path d="M0 19H60L35 32L50 45L28 36Z" fill="#000" />
        </svg>
      </Task>
      <Task label="Game" open>
        <svg viewBox="0 0 60 60" className="size-[60px]" aria-hidden="true">
          <path d="M0 0H60V60H0Z" fill="#5b8a93" />
          <circle cx="30" cy="30" r="28" fill="#1d3a42" stroke="#9cc3c6" strokeWidth="2" />
          <circle cx="30" cy="30" r="19" fill="#8f8a66" stroke="#d6dcc8" strokeWidth="3" strokeDasharray="3 5" />
          <circle cx="30" cy="30" r="14" fill="#d98a1c" />
          <circle cx="30" cy="30" r="8" fill="#ffc83a" />
        </svg>
      </Task>
      <Task label="Flash" open>
        <svg viewBox="0 0 60 60" className="size-[60px]" aria-hidden="true">
          <path d="M0 0H60V60H0Z" fill="#b30a08" />
          <path d="M34 6L17 34H27L26 54L43 26H33Z" fill="#fff" />
        </svg>
      </Task>
      <Task label="Paint" open>
        <Palette className="size-14" />
      </Task>
      <button
        aria-label="Lightroom"
        className="flex h-full w-[122px] shrink-0 items-center justify-center border-b-[5px] border-[#4be02c] bg-linear-to-r from-[#4b7f48] from-65% to-[#555] to-65%"
      >
        <LrBadge className="size-14 border-[3px] text-[32px] leading-none" />
      </button>

      <div className="flex flex-1 items-center justify-end bg-linear-to-b from-[#050505] from-50% to-[#1b1b1a] to-50% text-[28px] leading-none">
        <svg viewBox="0 0 32 18" className="h-[18px] w-8" fill="none" stroke="#fff" strokeWidth="2" aria-hidden="true">
          <path d="M1 17L16 2L31 17" />
        </svg>
        <svg viewBox="0 0 40 32" className="ml-11 h-8 w-10" fill="none" stroke="#fff" strokeWidth="2" aria-hidden="true">
          <path d="M3 0V6M9 0V6M1 6H11V12Q6 18 1 12ZM6 15V28H14M12 8H36V28H14M36 13H39V22H36" />
          <path d="M14 12H33V25H11Z" fill="#fff" stroke="none" />
        </svg>
        <svg viewBox="0 0 32 32" className="ml-[46px] size-8" fill="none" stroke="#fff" strokeWidth="2" aria-hidden="true">
          <path d="M1 31Q2 4 31 1M8 31Q9 11 31 8M15 31Q17 18 31 15" />
          <circle cx="27" cy="28" r="3" fill="#fff" />
        </svg>
        <svg viewBox="0 0 38 30" className="ml-[42px] h-[30px] w-[38px]" fill="none" stroke="#fff" strokeWidth="2" aria-hidden="true">
          <path d="M1 9H7L14 2V28L7 21H1ZM22 9L36 23M36 9L22 23" />
        </svg>
        <svg viewBox="0 0 40 40" className="ml-[52px] size-10" fill="none" stroke="#fff" strokeWidth="2" aria-hidden="true">
          <path d="M14 34L16 24L28 3Q32 -1 34 5L22 28L14 34M27 8L31 11M14 24Q2 24 2 31Q2 38 9 37Q15 36 14 34M26 26Q32 28 36 24Q41 18 33 16" />
        </svg>
        <div className="ml-12 flex w-14 flex-col items-center gap-[18px]">
          <span>ENG</span>
          <span>CMS</span>
        </div>
        <div className="ml-8 flex w-[156px] flex-col items-center gap-[18px] whitespace-nowrap">
          <time>9:21 AM</time>
          <time>2018-03-29</time>
        </div>
        <svg viewBox="0 0 42 42" className="ml-11 size-[42px]" aria-hidden="true">
          <path d="M0 0H40V34H26L20 41V34H0Z" fill="#fff" />
          <path d="M7 9H32M7 17H32M7 25H22" stroke="#111" strokeWidth="2" />
          <path d="M34 24Q42 28 39 36Q34 43 26 38Q35 36 34 24Z" fill="#fff" stroke="#111" strokeWidth="2" />
        </svg>
        <span className="mr-2.5 ml-[49px] h-full w-0.5 bg-[#666]" />
      </div>
    </footer>
  );
}

export default function App() {
  return (
    <div className="relative flex h-screen flex-col overflow-hidden bg-black font-['Open_Sans','Noto_Sans',sans-serif]">
      <PaintWindow />
      <Taskbar />
      <LightroomWindow />
    </div>
  );
}
